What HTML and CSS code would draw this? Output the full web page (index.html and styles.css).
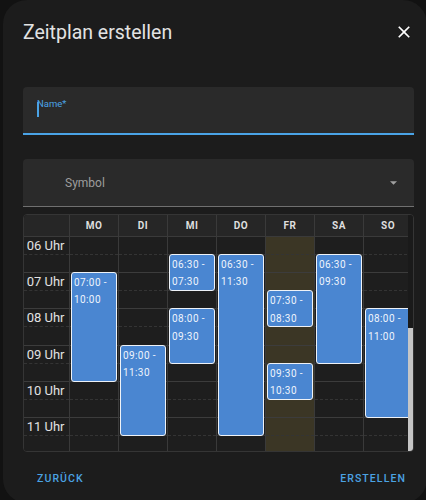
FILE: index.html
```html
<!DOCTYPE html>
<html lang="de">
<head>
  <meta charset="UTF-8">
  <meta name="viewport" content="width=device-width, initial-scale=1.0">
  <title>Zeitplan erstellen</title>
  <link rel="stylesheet" href="styles.css">
</head>
<body>
  <div class="dialog">
    <header class="dialog-head">
      <h1 class="dialog-title">Zeitplan erstellen</h1>
      <button class="close" aria-label="Schließen">
        <svg viewBox="0 0 24 24" width="20" height="20">
          <path d="M19 6.41L17.59 5 12 10.59 6.41 5 5 6.41 10.59 12 5 17.59 6.41 19 12 13.41 17.59 19 19 17.59 13.41 12z"/>
        </svg>
      </button>
    </header>

    <!-- Name input, focused -->
    <div class="field field-name">
      <span class="field-label">Name*</span>
      <span class="caret"></span>
    </div>

    <!-- Icon picker -->
    <div class="field field-select">
      <span class="select-text">Symbol</span>
      <svg class="select-arrow" viewBox="0 0 10 5" width="7" height="4">
        <path d="M0 0l5 5 5-5z"/>
      </svg>
    </div>

    <!-- Week planner -->
    <div class="planner">
      <div class="planner-view">
        <div class="planner-head" id="plannerHead"></div>
        <div class="planner-body" id="plannerBody"></div>
      </div>
      <div class="scrollbar"><div class="thumb"></div></div>
    </div>

    <div class="actions">
      <button class="text-btn">Zurück</button>
      <button class="text-btn">Erstellen</button>
    </div>
  </div>

  <script>
    const days = [
      { name: 'MO', events: [['07:00', '10:00']] },
      { name: 'DI', events: [['09:00', '11:30']] },
      { name: 'MI', events: [['06:30', '07:30'], ['08:00', '09:30']] },
      { name: 'DO', events: [['06:30', '11:30']] },
      { name: 'FR', today: true, events: [['07:30', '08:30'], ['09:30', '10:30']] },
      { name: 'SA', events: [['06:30', '09:30']] },
      { name: 'SO', events: [['08:00', '11:00']] }
    ];
    const firstHour = 6, lastHour = 12;

    const head = document.getElementById('plannerHead');
    const body = document.getElementById('plannerBody');

    const toHours = (t) => {
      const [h, m] = t.split(':').map(Number);
      return h + m / 60 - firstHour;
    };

    const addSlots = (col, withLabels) => {
      for (let i = 0; i < (lastHour - firstHour) * 2; i++) {
        const slot = document.createElement('div');
        slot.className = 'slot ' + (i % 2 ? 'full' : 'half');
        if (withLabels && i % 2 === 0) {
          const hour = String(firstHour + i / 2).padStart(2, '0');
          slot.innerHTML = `<span class="slot-label">${hour} Uhr</span>`;
        }
        col.appendChild(slot);
      }
    };

    // time column
    head.insertAdjacentHTML('beforeend', '<div class="head-cell"></div>');
    const timeCol = document.createElement('div');
    timeCol.className = 'time-col';
    addSlots(timeCol, true);
    body.appendChild(timeCol);

    days.forEach((day) => {
      head.insertAdjacentHTML('beforeend', `<div class="head-cell day-cell">${day.name}</div>`);

      const col = document.createElement('div');
      col.className = 'day' + (day.today ? ' today' : '');
      addSlots(col, false);

      day.events.forEach(([from, to]) => {
        const ev = document.createElement('div');
        ev.className = 'event';
        ev.style.setProperty('--from', toHours(from));
        ev.style.setProperty('--to', toHours(to));
        ev.textContent = `${from} - ${to}`;
        col.appendChild(ev);
      });

      body.appendChild(col);
    });
  </script>
</body>
</html>
```

FILE: styles.css
```css
body {
  margin: 0;
  background: #121212;
  font-family: Roboto, "Noto Sans", sans-serif;
  overflow: hidden;
}

.dialog {
  --hour: 36.2px;
  margin-left: 3px;
  width: 424px;
  height: 503px;
  box-sizing: border-box;
  padding: 0 13px 0 20px;
  background: #1c1c1c;
  border-radius: 24px;
  display: flex;
  flex-direction: column;
}

.dialog-head {
  display: flex;
  align-items: center;
  justify-content: space-between;
  padding-top: 19px;
}

.dialog-title {
  margin: 0;
  font-size: 19.5px;
  font-weight: 400;
  line-height: 28px;
  color: #e3e3e3;
}

.close {
  display: flex;
  width: 20px;
  height: 20px;
  padding: 0;
  margin-top: -2px;
  border: 0;
  background: none;
}

.close svg {
  fill: #ffffff;
}

/* text fields */

.field {
  position: relative;
  margin-top: 40px;
  height: 48px;
  box-sizing: border-box;
  background: #2a2a2a;
  border-radius: 4px 4px 0 0;
}

.field-name {
  padding: 11px 14px 0;
  border-bottom: 2px solid #4aa3e6;
}

.field-label {
  display: block;
  font-size: 9.5px;
  line-height: 12px;
  color: #4aa3e6;
}

.caret {
  position: absolute;
  left: 14px;
  top: 14.5px;
  width: 1.5px;
  height: 15px;
  background: #4aa3e6;
}

.field-select {
  margin-top: 24px;
  padding: 0 17px 0 42px;
  display: flex;
  align-items: center;
  justify-content: space-between;
  border-bottom: 1px solid #707070;
}

.select-text {
  font-size: 12px;
  color: #9d9d9d;
}

.select-arrow {
  fill: #a0a0a0;
}

/* week planner */

.planner {
  margin-top: 7px;
  height: 238px;
  box-sizing: border-box;
  border: 1px solid #353535;
  border-radius: 4px;
  display: flex;
  overflow: hidden;
}

.planner-view {
  flex: 1;
  min-width: 0;
  overflow: hidden;
  background: #1e1e1e;
}

.planner-head,
.planner-body {
  display: grid;
  grid-template-columns: 45px repeat(7, 49px);
}

.planner-head {
  height: 22px;
  box-sizing: border-box;
  background: #262626;
  border-bottom: 1px solid #3a3a3a;
}

.head-cell {
  display: flex;
  align-items: center;
  justify-content: center;
  font-size: 10px;
  font-weight: 700;
  letter-spacing: 0.5px;
  color: #dedede;
}

.day-cell {
  border-left: 1px solid #3a3a3a;
}

.planner-body {
  height: 214px;
  overflow: hidden;
}

.day {
  position: relative;
  border-left: 1px solid #3a3a3a;
}

.day.today {
  background: #3b3625;
}

.slot {
  height: calc(var(--hour) / 2);
  box-sizing: border-box;
  border-bottom: 1px dashed #343434;
}

.slot.full {
  border-bottom: 1px solid #3c3c3c;
}

.slot-label {
  display: block;
  padding-right: 4.5px;
  text-align: right;
  font-size: 13px;
  line-height: 18px;
  color: #e2e2e2;
}

.event {
  position: absolute;
  left: 1px;
  right: 1px;
  top: calc(var(--from) * var(--hour) - 1px);
  height: calc((var(--to) - var(--from)) * var(--hour) + 1px);
  box-sizing: border-box;
  padding: 1px 2px;
  background: #4a86d1;
  border: 1px solid #eef2f7;
  border-radius: 3px;
  font-size: 10px;
  font-weight: 400;
  line-height: 17.3px;
  letter-spacing: 0.4px;
  color: #eef4fc;
  overflow: hidden;
}

.scrollbar {
  width: 5px;
  display: flex;
  flex-direction: column;
  justify-content: flex-end;
  background: #1a1a1a;
}

.thumb {
  height: 123px;
  background: #c6c6c6;
}

/* footer buttons */

.actions {
  display: flex;
  justify-content: space-between;
  padding: 8px 8px 0 14px;
}

.text-btn {
  height: 36px;
  padding: 0;
  border: 0;
  background: none;
  font-family: Roboto, "Noto Sans", sans-serif;
  font-size: 10.5px;
  font-weight: 500;
  letter-spacing: 1.1px;
  text-transform: uppercase;
  color: #4ba3e3;
}
```
